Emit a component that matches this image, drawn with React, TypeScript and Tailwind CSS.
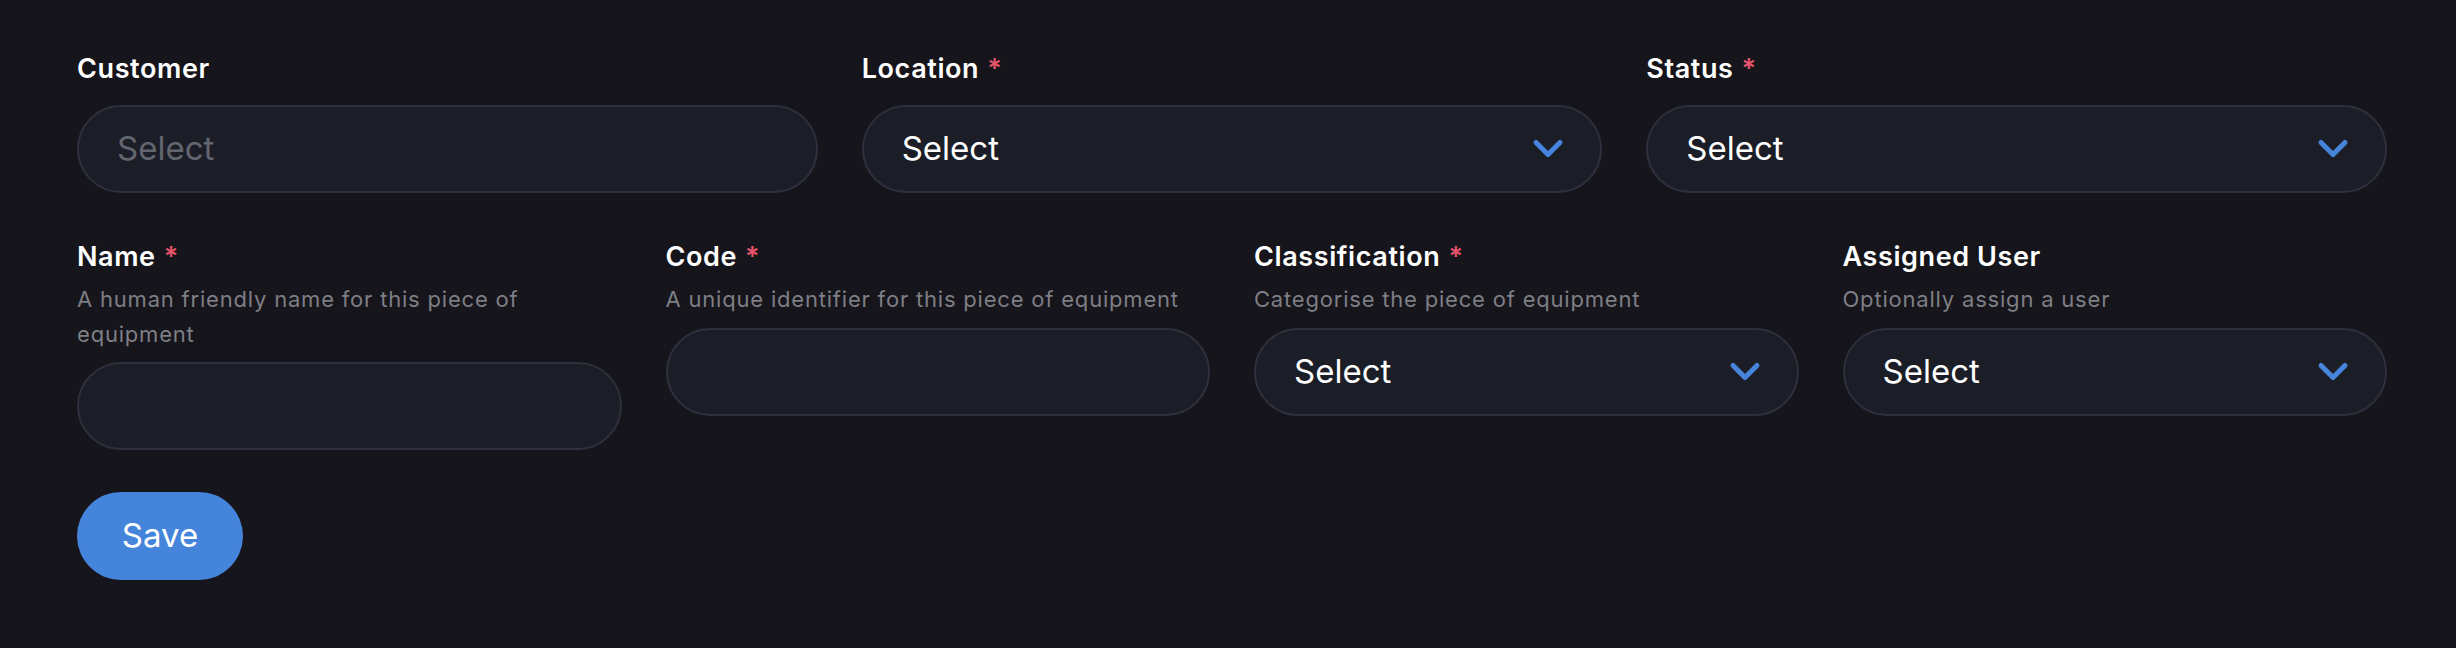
import React from "react";

const font = { fontFamily: "Inter, 'Noto Sans', sans-serif" };

function Chevron() {
  return (
    <svg width="32" height="22" viewBox="0 0 32 22" fill="none" className="shrink-0">
      <path d="M4 4.5 L16 16.5 L28 4.5" stroke="#4784dc" strokeWidth="5" strokeLinecap="round" strokeLinejoin="round" />
    </svg>
  );
}

function Label({ text, required }: { text: string; required?: boolean }) {
  return (
    <div className="text-[27px] leading-[36px] font-semibold text-white tracking-[0.6px]">
      {text}
      {required && <span className="ml-[8px] text-[#e5546b]">*</span>}
    </div>
  );
}

function Helper({ text }: { text: string }) {
  return <div className="mt-[7px] text-[22px] leading-[35px] tracking-[0.8px] text-[#7e7e85]">{text}</div>;
}

function SelectBox({ placeholder, chevron = true }: { placeholder?: boolean; chevron?: boolean }) {
  return (
    <div className="h-[88px] rounded-full border-2 border-[#2e303d] bg-[#1b1d27] flex items-center justify-between pl-[38px] pr-[36px]">
      <span className={"text-[33px] " + (placeholder ? "text-[#63656f]" : "text-white")}>Select</span>
      {chevron && <Chevron />}
    </div>
  );
}

function InputBox() {
  return <div className="h-[88px] rounded-full border-2 border-[#2e303d] bg-[#1b1d27]" />;
}

export default function App() {
  return (
    <div className="w-[2456px] h-[648px] bg-[#16151b] overflow-hidden" style={font}>
      <div className="ml-[77px] w-[2310px] pt-[51px]">
        <div className="grid grid-cols-3 gap-x-[44px]">
          <div>
            <Label text="Customer" />
            <div className="mt-[18px]">
              <SelectBox placeholder chevron={false} />
            </div>
          </div>
          <div>
            <Label text="Location" required />
            <div className="mt-[18px]">
              <SelectBox />
            </div>
          </div>
          <div>
            <Label text="Status" required />
            <div className="mt-[18px]">
              <SelectBox />
            </div>
          </div>
        </div>

        <div className="grid grid-cols-4 gap-x-[44px] mt-[46px] items-start">
          <div>
            <Label text="Name" required />
            <Helper text="A human friendly name for this piece of equipment" />
            <div className="mt-[10px]">
              <InputBox />
            </div>
          </div>
          <div>
            <Label text="Code" required />
            <Helper text="A unique identifier for this piece of equipment" />
            <div className="mt-[11px]">
              <InputBox />
            </div>
          </div>
          <div>
            <Label text="Classification" required />
            <Helper text="Categorise the piece of equipment" />
            <div className="mt-[11px]">
              <SelectBox />
            </div>
          </div>
          <div>
            <Label text="Assigned User" />
            <Helper text="Optionally assign a user" />
            <div className="mt-[11px]">
              <SelectBox />
            </div>
          </div>
        </div>

        <button className="mt-[42px] w-[166px] h-[88px] rounded-full bg-[#4584db] text-white text-[33px] flex items-center justify-center">
          Save
        </button>
      </div>
    </div>
  );
}
